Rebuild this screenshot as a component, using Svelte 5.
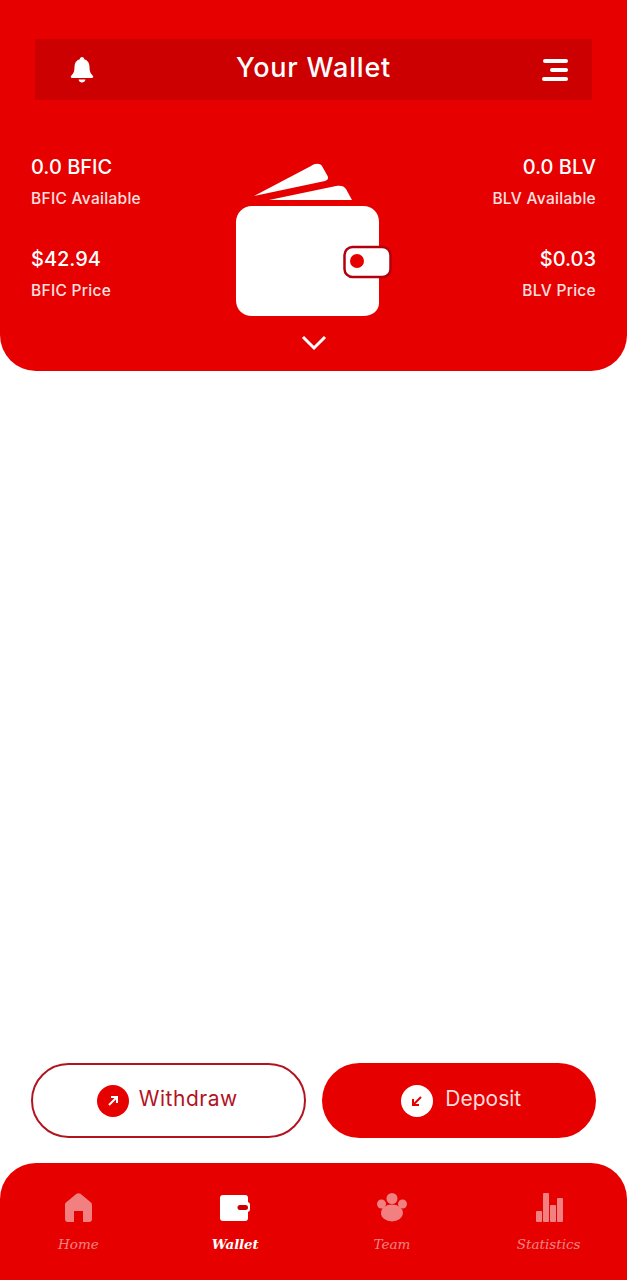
<script>
  const leftStats = [
    { value: '0.0 BFIC', label: 'BFIC Available' },
    { value: '$42.94', label: 'BFIC Price' }
  ];
  const rightStats = [
    { value: '0.0 BLV', label: 'BLV Available' },
    { value: '$0.03', label: 'BLV Price' }
  ];
  const tabs = ['Home', 'Wallet', 'Team', 'Statistics'];
</script>

<div class="page">
  <header class="hero">
    <div class="titlebar">
      <svg class="bell" viewBox="0 0 24 28" width="24" height="28">
        <path fill="#fff" d="M12 1c1.300 0 2.200 1 2.200 2.200 3.600 1 5.300 4 5.300 7.800 0 4.500 1 6.600 3.300 8.700.9.900.4 2.300-.9 2.300H2.100c-1.300 0-1.800-1.400-.9-2.300C3.500 17.600 4.500 15.500 4.500 11c0-3.800 1.700-6.800 5.300-7.800C9.800 2 10.700 1 12 1z" />
        <path fill="#fff" d="M8.500 23.500h7c-.4 1.800-1.800 3-3.500 3s-3.100-1.200-3.500-3z" />
      </svg>
      <h1>Your Wallet</h1>
      <svg class="menu" viewBox="0 0 26 24" width="26" height="24">
        <rect x="1" y="1" width="25" height="4" rx="2" fill="#fff" />
        <rect x="8" y="10" width="18" height="4" rx="2" fill="#fff" />
        <rect x="0" y="19" width="26" height="4" rx="2" fill="#fff" />
      </svg>
    </div>

    <div class="summary">
      <div class="stats">
        {#each leftStats as s}
          <div class="stat">
            <div class="value">{s.value}</div>
            <div class="label">{s.label}</div>
          </div>
        {/each}
      </div>

      <svg class="wallet" viewBox="0 0 156 154" width="156" height="154">
        <path fill="#fff" d="M18 33 L75 3 C79 0 84 0 86 3 L91 12 C93 15 92 17 89 18 Z" />
        <path fill="#fff" d="M33 37 L100 23 C105 22 108 23 110 26 L116 37 Z" />
        <path fill="#fff" d="M16 43 H127 C137 43 143 50 143 59 V140 C143 147 137 153 127 153 H16 C7 153 0 147 0 137 V59 C0 50 7 43 16 43 Z" />
        <rect x="108.500" y="84" width="46" height="30" rx="8" fill="#fff" stroke="#b3000e" stroke-width="2.500" />
        <circle cx="121" cy="98" r="7" fill="#e60000" />
      </svg>

      <div class="stats right">
        {#each rightStats as s}
          <div class="stat">
            <div class="value">{s.value}</div>
            <div class="label">{s.label}</div>
          </div>
        {/each}
      </div>
    </div>

    <svg class="chevron" viewBox="0 0 26 16" width="26" height="16">
      <path d="M2 2 L13 13 L24 2" fill="none" stroke="#fff" stroke-width="3" />
    </svg>
  </header>

  <div class="spacer"></div>

  <div class="actions">
    <button class="action outline">
      <span class="round red">
        <svg viewBox="0 0 12 12" width="12" height="12">
          <path d="M2 10 L10 2 M4 2 H10 V8" fill="none" stroke="#fff" stroke-width="2" />
        </svg>
      </span>
      <span class="caption">Withdraw</span>
    </button>
    <button class="action solid">
      <span class="round white">
        <svg viewBox="0 0 12 12" width="12" height="12">
          <path d="M10 2 L2 10 M2 4 V10 H8" fill="none" stroke="#e60000" stroke-width="2" />
        </svg>
      </span>
      <span class="caption">Deposit</span>
    </button>
  </div>

  <nav class="tabbar">
    {#each tabs as tab, i}
      <div class="tab" class:active={tab === 'Wallet'}>
        <svg viewBox="0 0 32 32" width="32" height="32">
          {#if i === 0}
            <path fill="#fff" fill-rule="evenodd" d="M14.500 2.800 C15.500 2 17.500 2 18.500 2.800 L29 11.500 C29.700 12 30 13 30 14 V28 C30 30 29 31 27 31 H6 C4 31 3 30 3 28 V14 C3 13 3.300 12 4 11.500 Z M12 20 V31 H21 V20 Z" />
          {:else if i === 1}
            <rect x="1" y="4" width="28" height="26" rx="3" fill="#fff" />
            <rect x="20" y="11" width="11" height="10" rx="3" fill="#fff" />
            <rect x="18.500" y="14" width="10.500" height="5" rx="2.500" fill="#cc0000" />
          {:else if i === 2}
            <circle cx="16" cy="7.500" r="5.500" fill="#fff" />
            <circle cx="5.500" cy="13" r="4.500" fill="#fff" />
            <circle cx="26.500" cy="13" r="4.500" fill="#fff" />
            <ellipse cx="16" cy="22" rx="11" ry="8.500" fill="#fff" />
          {:else}
            <rect x="3" y="20" width="6" height="11" rx="1" fill="#fff" />
            <rect x="10" y="2" width="6" height="29" rx="1" fill="#fff" />
            <rect x="17" y="14" width="6" height="17" rx="1" fill="#fff" />
            <rect x="24" y="7" width="6" height="24" rx="1" fill="#fff" />
          {/if}
        </svg>
        <span>{tab}</span>
      </div>
    {/each}
  </nav>
</div>

<style>
  :global(body) {
    margin: 0;
    background: #fff;
  }

  .page {
    display: flex;
    flex-direction: column;
    height: 1280px;
    font-family: Inter, "Open Sans", sans-serif;
    overflow: hidden;
  }

  .hero {
    height: 371px;
    box-sizing: border-box;
    background: #e60000;
    border-radius: 0 0 36px 36px;
    padding: 39px 31px 0;
    color: #fff;
    display: flex;
    flex-direction: column;
  }

  .titlebar {
    height: 61px;
    margin: 0 4px;
    padding: 0 24px;
    background: #cc0000;
    display: grid;
    grid-template-columns: 1fr auto 1fr;
    align-items: center;
  }

  .bell {
    margin-left: 11px;
  }

  .menu {
    justify-self: end;
  }

  h1 {
    margin: 0 0 4px;
    font-size: 27px;
    font-weight: 500;
    letter-spacing: 0.8px;
  }

  .summary {
    margin-top: 54px;
    display: flex;
    justify-content: space-between;
    align-items: flex-start;
  }

  .wallet {
    margin-top: 9px;
  }

  .stats {
    display: flex;
    flex-direction: column;
    gap: 37px;
    width: 130px;
    white-space: nowrap;
  }

  .stats.right {
    align-items: flex-end;
    text-align: right;
  }

  .value {
    font-size: 20px;
    line-height: 26px;
    font-weight: 500;
  }

  .label {
    margin-top: 9px;
    font-size: 15.5px;
    line-height: 20px;
    font-weight: 500;
    letter-spacing: 0.3px;
    color: #ffe0e0;
  }

  .chevron {
    align-self: center;
    margin-top: 18px;
  }

  .spacer {
    flex: 1;
  }

  .actions {
    display: grid;
    grid-template-columns: 1fr 1fr;
    gap: 16px;
    padding: 0 31px;
    margin-bottom: 25px;
  }

  .action {
    height: 75px;
    border-radius: 38px;
    display: flex;
    align-items: center;
    justify-content: center;
    gap: 10px;
    font-family: inherit;
    font-size: 21px;
    padding: 0;
  }

  .caption {
    padding-bottom: 4px;
  }

  .outline {
    background: #fff;
    border: 2px solid #b3131f;
    color: #b3131f;
    letter-spacing: 0.5px;
    padding-right: 2px;
  }

  .solid {
    background: #e60000;
    border: none;
    color: #ffdcdc;
    gap: 12px;
    padding-left: 5px;
  }

  .round {
    width: 32px;
    height: 32px;
    border-radius: 50%;
    display: flex;
    align-items: center;
    justify-content: center;
  }

  .red {
    background: #e60000;
  }

  .white {
    background: #fff;
  }

  .tabbar {
    height: 117px;
    box-sizing: border-box;
    background: #e60000;
    border-radius: 36px 36px 0 0;
    display: grid;
    grid-template-columns: repeat(4, 1fr);
    padding: 28px 0 0;
  }

  .tab {
    display: flex;
    flex-direction: column;
    align-items: center;
    gap: 12px;
    opacity: 0.5;
  }

  .tab.active {
    opacity: 1;
  }

  .tab span {
    font-family: "DejaVu Serif", serif;
    font-style: italic;
    font-size: 13.5px;
    line-height: 18px;
    color: #fff;
  }

  .tab.active span {
    font-weight: 700;
    letter-spacing: -0.2px;
  }
</style>
